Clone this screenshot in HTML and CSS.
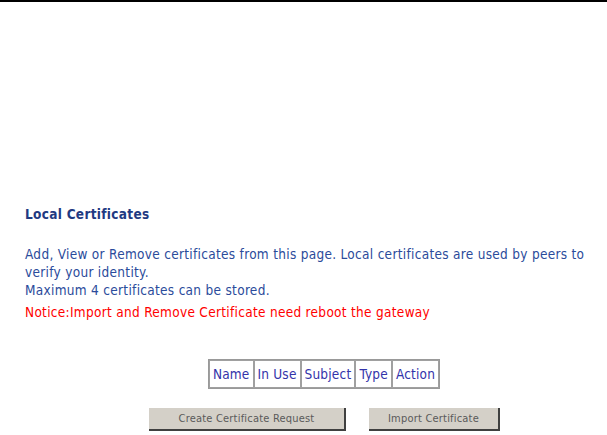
FILE: index.html
```html
<!DOCTYPE html>
<html>
<head>
<meta charset="utf-8">
<link rel="stylesheet" href="styles.css">
</head>
<body>
<div class="topline"></div>
<div class="content">
  <div class="title">Local Certificates</div>
  <div class="desc">
    <div>Add, View or Remove certificates from this page. Local certificates are used by peers to verify your identity.</div>
    <div>Maximum 4 certificates can be stored.</div>
    <div class="notice">Notice:Import and Remove Certificate need reboot the gateway</div>
  </div>
  <div class="tablewrap">
    <table class="certs">
      <tr><td>Name</td><td>In Use</td><td>Subject</td><td>Type</td><td>Action</td></tr>
    </table>
  </div>
  <div class="buttons">
    <button class="btn btn-create">Create Certificate Request</button>
    <button class="btn btn-import">Import Certificate</button>
  </div>
</div>
</body>
</html>
```
FILE: styles.css
```css
html, body {
  margin: 0;
  padding: 0;
  background: #fff;
}
body {
  font-family: "DejaVu Sans Condensed", "DejaVu Sans", sans-serif;
  font-size: 13.5px;
  letter-spacing: 0.3px;
  color: #2b4b9b;
}
.topline {
  height: 2px;
  background: #000;
}
.content {
  padding: 203px 0 0 25px;
  width: 575px;
}
.title {
  font-weight: bold;
  color: #1f3a82;
  line-height: 18px;
}
.desc {
  margin-top: 22px;
  line-height: 18px;
}
.notice {
  color: #ff0000;
  margin-top: 4px;
}
.tablewrap {
  display: flex;
  justify-content: center;
  margin-top: 38px;
  padding-left: 23px;
}
.certs {
  border-collapse: separate;
  border-spacing: 0;
  border: 1px solid #999;
}
.certs td {
  border: 1px solid #a0a0a0;
  padding: 5px 3px;
  color: #3333aa;
  letter-spacing: 0.2px;
}
.buttons {
  display: flex;
  gap: 23px;
  margin-top: 19px;
  padding-left: 124px;
}
.btn {
  font-family: "DejaVu Sans Condensed", "DejaVu Sans", sans-serif;
  font-size: 11px;
  letter-spacing: 0.2px;
  color: #5a5a5a;
  background: #d4d0c8;
  border: none;
  border-right: 2px solid #404040;
  border-bottom: 2px solid #404040;
  height: 23px;
  padding: 0;
}
.btn-create { width: 197px; }
.btn-import { width: 131px; }
```
